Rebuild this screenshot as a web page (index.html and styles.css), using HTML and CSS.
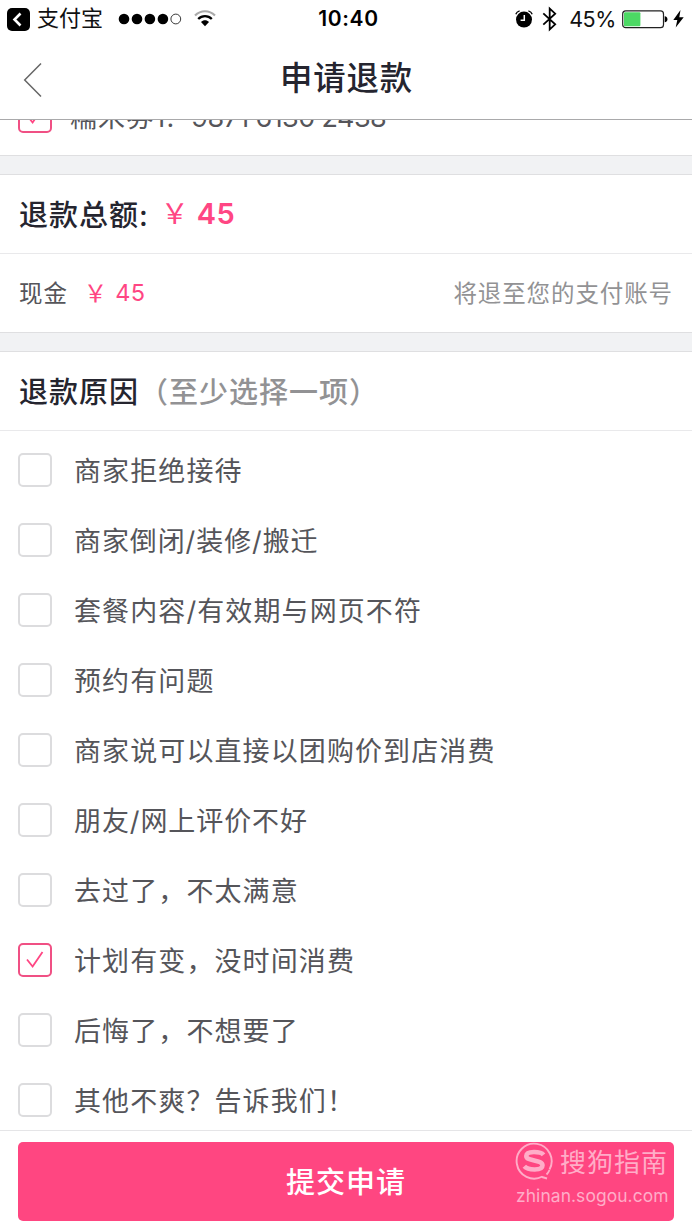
FILE: index.html
```html
<!DOCTYPE html>
<html lang="zh-CN">
<head>
<meta charset="utf-8">
<title>申请退款</title>
<link rel="stylesheet" href="styles.css">
</head>
<body>
<div class="screen">
  <header class="top">
    <div class="status">
      <div class="status-left">
        <svg class="back-app" width="23" height="23" viewBox="0 0 23 23"><rect width="23" height="23" rx="5" fill="#000"/><path d="M13.500 5.500 7.500 11.500l6 6" fill="none" stroke="#fff" stroke-width="2.600"/></svg>
        <span class="app-name">支付宝</span>
        <svg class="signal" width="64" height="12" viewBox="0 0 64 12"><circle cx="6" cy="6" r="5.300"/><circle cx="19" cy="6" r="5.300"/><circle cx="31.900" cy="6" r="5.300"/><circle cx="44.900" cy="6" r="5.300"/><circle cx="57.800" cy="6" r="4.900" fill="none" stroke="#222" stroke-width=".9"/></svg>
        <svg class="wifi" width="22" height="18" viewBox="0 0 22 18"><path d="M1 5.500C6.800-.2 15.200-.2 21 5.500" fill="none" stroke="#aaa" stroke-width="2.200"/><path d="M4.200 9C8 5.200 14 5.200 17.800 9" fill="none" stroke="#000" stroke-width="2.300"/><path d="M7 12c2.300-2.300 5.700-2.300 8 0l-4 4.200z"/></svg>
      </div>
      <span class="clock">10:40</span>
      <div class="status-right">
        <svg class="alarm" width="18" height="18" viewBox="0 0 18 18"><circle cx="9" cy="9.600" r="8"/><path d="M.8 4.300Q1.700 1.700 4.600.9M13.400.9q2.900.8 3.800 3.400" fill="none" stroke="#000" stroke-width="1.300"/><path d="M9.300 5v5.200H5.600" fill="none" stroke="#fff" stroke-width="1.500"/></svg>
        <svg class="bluetooth" width="16" height="26" viewBox="0 0 16 26"><path d="M1.300 7.300 13.200 18.300 7.700 23.500V2.500l5.500 5.200L1.300 18.700" fill="none" stroke="#000" stroke-width="1.800"/></svg>
        <span class="percent">45%</span>
        <svg class="battery" width="46" height="19" viewBox="0 0 46 19"><rect x=".7" y=".9" width="40.800" height="16.800" rx="3" fill="#fff" stroke="#222" stroke-width="1.200"/><rect x="2" y="2.300" width="16.400" height="14" rx="1" fill="#4cd964"/><path d="M42.700 6.300q2.700.4 2.700 3t-2.700 3z"/></svg>
        <svg class="bolt" width="11" height="18" viewBox="0 0 11 18"><path d="M7.500 0 .3 10h4L2.700 17.500 10.700 7.200H6.300z"/></svg>
      </div>
    </div>
    <nav class="nav">
      <svg class="back" width="20" height="36" viewBox="0 0 20 36"><path d="M18 1.500 1.700 18 18 34.500" fill="none" stroke="#666" stroke-width="1.500"/></svg>
      <h1 class="title">申请退款</h1>
    </nav>
  </header>

  <section class="coupon">
    <div class="option coupon-row"><span class="box checked"><svg width="20" height="20" viewBox="0 0 20 20"><path d="m2 9.500 5.600 7L17.500 2"/></svg></span><span class="coupon-name">糯米券1:</span><span class="coupon-code">9871 6130 2438</span></div>
  </section>

  <section class="block">
    <div class="heading"><span>退款总额:</span><span class="yen">￥</span><span class="amount">45</span></div>
    <div class="cash"><span>现金</span><span class="yen">￥</span><span class="amount">45</span><span class="note">将退至您的支付账号</span></div>
  </section>

  <section class="block reasons">
    <div class="heading"><span>退款原因</span><span class="hint">（至少选择一项）</span></div>
    <div class="list">
      <div class="option"><span class="box"></span><span>商家拒绝接待</span></div>
      <div class="option"><span class="box"></span><span class="tight">商家倒闭/装修/搬迁</span></div>
      <div class="option"><span class="box"></span><span>套餐内容/有效期与网页不符</span></div>
      <div class="option"><span class="box"></span><span>预约有问题</span></div>
      <div class="option"><span class="box"></span><span>商家说可以直接以团购价到店消费</span></div>
      <div class="option"><span class="box"></span><span class="tight">朋友/网上评价不好</span></div>
      <div class="option"><span class="box"></span><span>去过了，不太满意</span></div>
      <div class="option"><span class="box checked"><svg width="20" height="20" viewBox="0 0 20 20"><path d="m2 9.500 5.600 7L17.500 2"/></svg></span><span>计划有变，没时间消费</span></div>
      <div class="option"><span class="box"></span><span>后悔了，不想要了</span></div>
      <div class="option"><span class="box"></span><span>其他不爽？告诉我们！</span></div>
    </div>
  </section>

  <footer class="footer">
    <button class="submit">提交申请</button>
    <div class="watermark">
      <div class="brand">
        <svg width="38" height="38" viewBox="0 0 38 38"><g fill="none" stroke="currentColor"><path d="M27.500 34.500A17.500 17.500 0 1 1 34.500 27.500" stroke-width="1.900"/><path d="M34.500 28q-1 2.500-3 4.500M27 35l5 1.500" stroke-width="1.900"/><path d="M28.500 12.800C26 9.600 11.500 8.300 11.300 14c-.1 5.700 16.200 3.300 16.200 9.300 0 5.800-14.500 5.200-18.200 1" stroke-width="4.600"/></g></svg>
        <span class="brand-name">搜狗指南</span>
      </div>
      <div class="site">zhinan.sogou.com</div>
    </div>
  </footer>
</div>
</body>
</html>
```
FILE: styles.css
```css
* { box-sizing: border-box; }

body {
  margin: 0;
  background: #fff;
  font-family: Inter, "Noto Sans CJK SC", sans-serif;
  color: #55555a;
}

.screen {
  width: 692px;
  height: 1230px;
  display: flex;
  flex-direction: column;
  overflow: hidden;
}

.screen svg { flex: none; display: block; }

.top {
  height: 120px;
  flex: none;
  border-bottom: 1px solid #a9a9ab;
}

.status {
  height: 38px;
  display: grid;
  grid-template-columns: 1fr auto 1fr;
  align-items: center;
  padding: 0 8px 0 7px;
  color: #111;
  line-height: 38px;
}

.status-left, .status-right { height: 38px; display: flex; align-items: center; }
.status-right { justify-content: flex-end; }
.app-name { height: 38px; margin-left: 7px; font-size: 22px; line-height: 36px; }
.signal { margin-left: 15px; }
.wifi { margin-left: 12px; }
.clock { padding-left: 6px; font-size: 21px; font-weight: 600; letter-spacing: .6px; color: #000; }
.bluetooth { margin-left: 9px; }
.percent { margin-left: 11px; font-size: 21.5px; letter-spacing: -.4px; }
.battery { margin-left: 6px; }
.bolt { margin-left: 5px; }

.nav {
  height: 81px;
  display: grid;
  grid-template-columns: 1fr auto 1fr;
  align-items: center;
  padding: 3px 22px 0 23px;
}

.title {
  margin: 0;
  padding-bottom: 3px;
  font-size: 32.4px;
  font-weight: 500;
  letter-spacing: .9px;
  line-height: 50px;
  color: #25252f;
}

.coupon {
  height: 36px;
  flex: none;
  display: flex;
  align-items: flex-end;
  overflow: hidden;
  padding: 0 18px 4px;
  border-bottom: 1px solid #dfdfe1;
}

.coupon-name { margin-left: -4px; }
.coupon-code { margin-left: 16px; letter-spacing: -.6px; }

.block {
  flex: none;
  border-top: 18px solid #f1f2f4;
}

.heading {
  height: 80px;
  display: flex;
  align-items: center;
  padding: 0 19px 3px;
  border-top: 1px solid #dfdfe1;
  border-bottom: 1px solid #e9e9eb;
  font-size: 29px;
  font-weight: 500;
  letter-spacing: 1px;
  color: #25252f;
}

.yen, .amount { color: #ff4683; }
.heading .yen { margin-left: 12px; padding-bottom: 2px; font-size: 28px; font-weight: 400; }
.heading .amount { margin-left: 7px; padding-top: 2px; font-weight: 600; letter-spacing: .3px; }
.hint { color: #929294; }

.cash {
  height: 79px;
  display: flex;
  align-items: center;
  padding: 0 19px 2px;
  border-bottom: 1px solid #dfdfe1;
  font-size: 23.5px;
  letter-spacing: .9px;
}

.cash .yen { margin-left: 16px; }
.cash .amount { margin-left: 7px; letter-spacing: .4px; }
.note { margin-left: auto; color: #929294; }

.list { height: 699px; padding-top: 4px; }

.option {
  height: 70px;
  flex: none;
  display: flex;
  align-items: center;
  gap: 22px;
  padding-left: 18px;
  font-size: 27px;
  letter-spacing: 1.1px;
  line-height: 40px;
  white-space: nowrap;
}

.option > span:not(.box) { padding-top: 3px; }
.tight { letter-spacing: .9px; }
.coupon .option { padding-left: 0; gap: 0; }
.coupon-row .box { margin-right: 22px; }

.box {
  width: 34px;
  height: 34px;
  flex: none;
  display: flex;
  align-items: center;
  justify-content: center;
  border: 2px solid #dcdcde;
  border-radius: 5px;
}

.box.checked { border-color: #f05084; }

.box path {
  fill: none;
  stroke: #ff4683;
  stroke-width: 1.8;
}

.footer {
  position: relative;
  height: 100px;
  flex: none;
  padding: 11px 18px 0;
  border-top: 1px solid #e5e5e7;
  background: #fff;
}

.submit {
  width: 656px;
  height: 79px;
  display: block;
  padding: 0 0 4px;
  border: 0;
  border-radius: 5px;
  background: #ff4681;
  color: #fff;
  font: 500 29px "Noto Sans CJK SC", sans-serif;
  letter-spacing: 1px;
}

.watermark {
  position: absolute;
  left: 515px;
  top: 10px;
  color: #ffadc8;
}

.brand { display: flex; align-items: center; gap: 7px; height: 40px; }
.brand-name { padding-top: 4px; font-size: 26px; letter-spacing: 1px; line-height: 40px; }
.site { padding: 2px 0 0 1px; font-size: 17.4px; letter-spacing: .1px; line-height: 26px; }
```
